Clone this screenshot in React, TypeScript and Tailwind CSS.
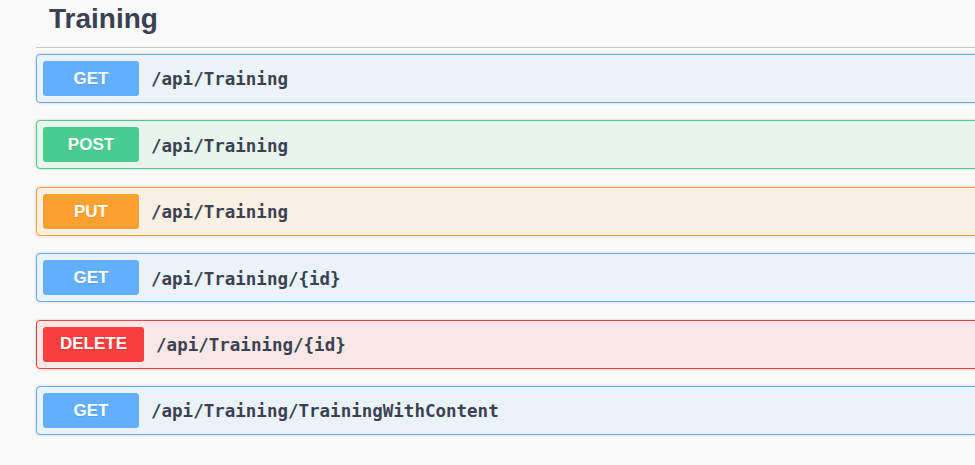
const ops = [
  { method: 'GET', path: '/api/Training' },
  { method: 'POST', path: '/api/Training' },
  { method: 'PUT', path: '/api/Training' },
  { method: 'GET', path: '/api/Training/{id}' },
  { method: 'DELETE', path: '/api/Training/{id}' },
  { method: 'GET', path: '/api/Training/TrainingWithContent' },
];

const styles: Record<string, { block: string; badge: string }> = {
  GET: { block: 'bg-[#ebf3fa] border-[#61affe]', badge: 'bg-[#61affe]' },
  POST: { block: 'bg-[#e8f5ef] border-[#49cc90]', badge: 'bg-[#49cc90]' },
  PUT: { block: 'bg-[#fbf0e4] border-[#fca130]', badge: 'bg-[#fca130]' },
  DELETE: { block: 'bg-[#fae7e7] border-[#f93e3e]', badge: 'bg-[#f93e3e]' },
};

function OpBlock({ method, path }: { method: string; path: string }) {
  const s = styles[method];
  return (
    <div
      className={`flex items-center w-[1000px] h-[49px] px-[6px] border rounded-[4px] shadow-[0_0_3px_rgba(0,0,0,0.19)] ${s.block}`}
    >
      <span
        className={`flex items-center justify-center min-w-[96px] h-[35px] px-[17px] rounded-[3px] text-white text-[17px] font-bold font-['Liberation_Sans',Arial,sans-serif] [text-shadow:0_1px_0_rgba(0,0,0,0.1)] ${s.badge}`}
      >
        {method}
      </span>
      <span className="ml-[12px] pt-[2px] text-[#3b4151] text-[17.5px] font-bold font-['DejaVu_Sans_Mono',monospace]">
        {path}
      </span>
    </div>
  );
}

export default function App() {
  return (
    <div className="w-[975px] h-[465px] overflow-hidden bg-[#fafafa] pl-[36px]">
      <h2 className="pl-[13px] pt-[5px] pb-[14px] leading-[28px] text-[28px] font-bold text-[#3b4151] font-['Liberation_Sans',Arial,sans-serif] border-b border-[#c4c5c8] w-[1000px]">
        Training
      </h2>
      <div className="flex flex-col gap-[17.4px] mt-[6px]">
        {ops.map((op, i) => (
          <OpBlock key={i} method={op.method} path={op.path} />
        ))}
      </div>
    </div>
  );
}
